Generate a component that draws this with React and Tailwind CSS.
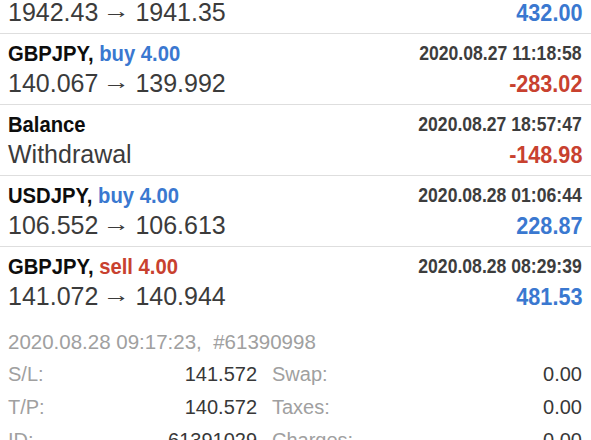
import React from 'react';

const rows = [
  { title: 'XAUUSD', side: 'buy', lots: '4.00', date: '2020.08.27 09:00:00', sub: ['1942.43', '1941.35'], pl: '432.00' },
  { title: 'GBPJPY', side: 'buy', lots: '4.00', date: '2020.08.27 11:18:58', sub: ['140.067', '139.992'], pl: '-283.02' },
  { title: 'Balance', date: '2020.08.27 18:57:47', sub: 'Withdrawal', pl: '-148.98' },
  { title: 'USDJPY', side: 'buy', lots: '4.00', date: '2020.08.28 01:06:44', sub: ['106.552', '106.613'], pl: '228.87' },
  { title: 'GBPJPY', side: 'sell', lots: '4.00', date: '2020.08.28 08:29:39', sub: ['141.072', '140.944'], pl: '481.53', last: true },
];

// condensed bold look: Liberation Sans bold squeezed horizontally
const bold = { fontFamily: '"Liberation Sans", Arial, sans-serif' };

function Row({ r }) {
  const neg = r.pl.startsWith('-');
  return (
    <div className={`pl-[8px] pr-[9px] pt-[4px] pb-[4px] ${r.last ? '' : 'border-b border-[#dedede]'}`}>
      <div className="flex h-[30px] items-center justify-between">
        <div className="inline-block origin-left scale-x-[0.92] whitespace-nowrap text-[22px] font-bold text-[#0d0d0d]" style={bold}>
          {r.title}
          {r.side && (
            <>
              ,{' '}
              <span className={r.side === 'buy' ? 'text-[#3a78d0]' : 'text-[#c8412f]'}>
                {r.side} {r.lots}
              </span>
            </>
          )}
        </div>
        <div className="inline-block origin-right scale-x-[0.88] whitespace-nowrap text-[20px] font-bold text-[#3d3d3d]" style={bold}>{r.date}</div>
      </div>
      <div className="flex h-[32px] items-center justify-between">
        <div className="flex items-center whitespace-nowrap text-[25px] text-[#3b3b3b] font-['Liberation_Sans',sans-serif]">
          {Array.isArray(r.sub) ? (
            <>
              <span>{r.sub[0]}</span>
              <span className="mx-[8px] inline-block -translate-y-[3px] scale-x-[1.3] text-[21px] leading-none">{'\u2192'}</span>
              <span>{r.sub[1]}</span>
            </>
          ) : r.sub}
        </div>
        <div className={`inline-block origin-right scale-x-[0.9] text-[24px] font-bold ${neg ? 'text-[#c8412f]' : 'text-[#3a78d0]'}`} style={bold}>{r.pl}</div>
      </div>
    </div>
  );
}

const details = [
  ['S/L:', '141.572', 'Swap:', '0.00'],
  ['T/P:', '140.572', 'Taxes:', '0.00'],
  ['ID:', '61391029', 'Charges:', '0.00'],
];

export default function App() {
  return (
    <div className="h-[440px] w-full overflow-hidden bg-white">
      <div className="-mt-[37px]">
        {rows.map((r, i) => <Row key={i} r={r} />)}
        <div className="pl-[8px] pr-[9px] pt-[10px] font-['Liberation_Sans',sans-serif]">
          <div className="flex h-[30px] items-center whitespace-nowrap text-[20.5px] text-[#a0a0a0]">2020.08.28 09:17:23,&nbsp; #61390998</div>
          {details.map((d, i) => (
            <div key={i} className="grid h-[33px] grid-cols-[249px_1fr] items-center gap-x-[15px] text-[20px]">
              <div className="flex justify-between">
                <span className="text-[#a0a0a0]">{d[0]}</span>
                <span className="text-[#383838]">{d[1]}</span>
              </div>
              <div className="flex justify-between">
                <span className="text-[#a0a0a0]">{d[2]}</span>
                <span className="text-[#383838]">{d[3]}</span>
              </div>
            </div>
          ))}
        </div>
      </div>
    </div>
  );
}
